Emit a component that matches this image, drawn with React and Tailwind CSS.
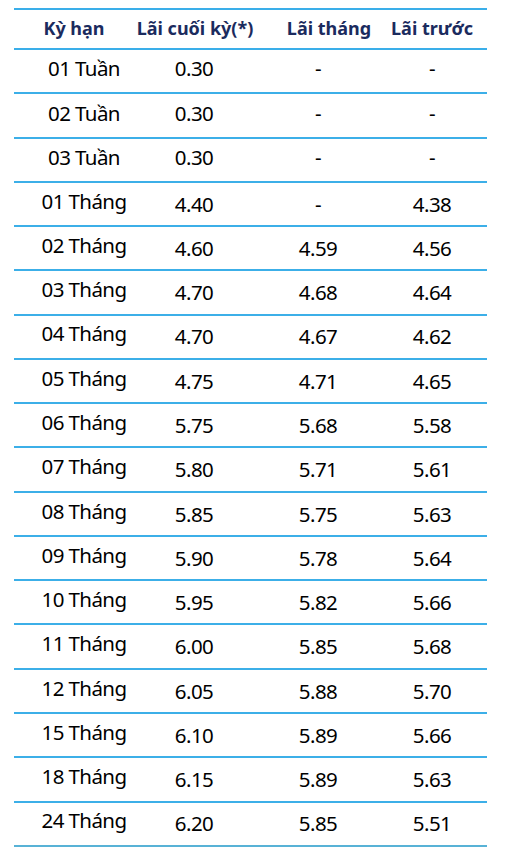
const rows = [
  ["01 Tuần", "0.30", "-", "-"],
  ["02 Tuần", "0.30", "-", "-"],
  ["03 Tuần", "0.30", "-", "-"],
  ["01 Tháng", "4.40", "-", "4.38"],
  ["02 Tháng", "4.60", "4.59", "4.56"],
  ["03 Tháng", "4.70", "4.68", "4.64"],
  ["04 Tháng", "4.70", "4.67", "4.62"],
  ["05 Tháng", "4.75", "4.71", "4.65"],
  ["06 Tháng", "5.75", "5.68", "5.58"],
  ["07 Tháng", "5.80", "5.71", "5.61"],
  ["08 Tháng", "5.85", "5.75", "5.63"],
  ["09 Tháng", "5.90", "5.78", "5.64"],
  ["10 Tháng", "5.95", "5.82", "5.66"],
  ["11 Tháng", "6.00", "5.85", "5.68"],
  ["12 Tháng", "6.05", "5.88", "5.70"],
  ["15 Tháng", "6.10", "5.89", "5.66"],
  ["18 Tháng", "6.15", "5.89", "5.63"],
  ["24 Tháng", "6.20", "5.85", "5.51"],
];

const grid = "grid grid-cols-[140px_80px_168px_60px_1fr]";

const RateRow = ({ row, last }) => {
  const isWeek = row[0].includes("Tuần");
  const termPad = isWeek ? "pb-[5px]" : "pb-[6px]";
  const numPad = isWeek ? "pb-[5px]" : "pt-[0px]";

  return (
    <div
      className={`${grid} h-[44.28px] border-b-2 ${
        last ? "border-[#58b2d6]" : "border-[#3cafe8]"
      }`}
    >
      <div className={`flex items-center justify-center whitespace-nowrap ${termPad}`}>
        {row[0]}
      </div>
      {row.slice(1).map((v, i) => (
        <div key={i} className={`flex items-center justify-center whitespace-nowrap ${numPad}`}>
          {v}
        </div>
      ))}
    </div>
  );
};

export default function App() {
  return (
    <div className="min-h-[868px] bg-white pt-2 pl-[14px] font-['Noto_Sans',sans-serif]">
      <div className="w-[473px]">
        {/* header */}
        <div
          className={`${grid} h-[42px] border-y-2 border-[#3aaee9] text-[18px] font-bold leading-none text-[#1b2b5e]`}
        >
          <div className="flex items-center justify-center whitespace-nowrap pr-[20px] pb-[3px]">Kỳ hạn</div>
          <div className="flex items-center justify-center whitespace-nowrap pl-[2px] pb-[3px]">Lãi cuối kỳ(*)</div>
          <div className="flex items-center justify-center whitespace-nowrap pl-[22px] pb-[3px]">Lãi tháng</div>
          <div className="flex items-center justify-center whitespace-nowrap pb-[3px]">Lãi trước</div>
        </div>

        <div className="text-[20.5px] leading-none tracking-[-0.6px] text-black">
          {rows.map((r, i) => (
            <RateRow key={r[0]} row={r} last={i === rows.length - 1} />
          ))}
        </div>
      </div>
    </div>
  );
}
